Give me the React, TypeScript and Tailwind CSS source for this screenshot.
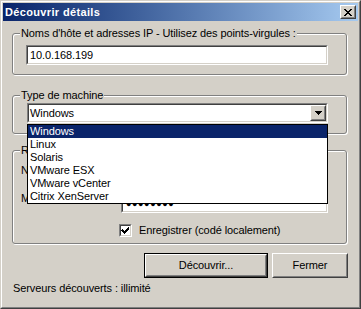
import React from 'react';

const font = "font-['Liberation_Sans',Arial,sans-serif] text-[11px] tracking-[-0.1px] leading-[13px] text-black";

const machines = ['Windows', 'Linux', 'Solaris', 'VMware ESX', 'VMware vCenter', 'Citrix XenServer'];

// Sunken 2px classic edit border
const Sunken = ({ className, children }: { className: string; children?: React.ReactNode }) => (
  <div className={`border border-t-[#808080] border-l-[#808080] border-r-white border-b-white ${className}`}>
    <div className="h-full border border-t-[#404040] border-l-[#404040] border-r-[#d4d0c8] border-b-[#d4d0c8] bg-white">
      {children}
    </div>
  </div>
);

const Raised = ({ className, children }: { className: string; children?: React.ReactNode }) => (
  <div className={`border border-t-white border-l-white border-r-[#404040] border-b-[#404040] bg-[#d4d0c8] ${className}`}>
    <div className="h-full border border-t-[#d4d0c8] border-l-[#d4d0c8] border-r-[#808080] border-b-[#808080] flex items-center justify-center">
      {children}
    </div>
  </div>
);

const GroupLabel = ({ children }: { children: React.ReactNode }) => (
  <span className="block w-fit h-[13px] -mt-[7px] ml-[7px] px-[1px] bg-[#d4d0c8]">{children}</span>
);

const groupCls = 'w-[335px] border border-[#808080] rounded-[3px] shadow-[inset_1px_1px_0_white,1px_1px_0_white]';

export default function App() {
  return (
    <div className={`${font} w-[361px] h-[309px] bg-[#d4d0c8] border border-t-[#d4d0c8] border-l-[#d4d0c8] border-r-[#404040] border-b-[#404040]`}>
      <div className="h-full p-px border border-t-white border-l-white border-r-[#808080] border-b-[#808080] flex flex-col">
        {/* Title bar */}
        <div className="h-[18px] flex items-center justify-between pl-[2px] pr-[2px] bg-gradient-to-r from-[#0a246a] to-[#a6caf0]">
          <span className="text-white font-bold tracking-[0.35px]">Découvrir détails</span>
          <Raised className="w-[16px] h-[14px]">
            <svg width="8" height="7" viewBox="0 0 8 7" shapeRendering="crispEdges">
              <path d="M0 0h2v1h1v1h2v-1h1v-1h2v1h-1v1h-1v1h-1v1h1v1h1v1h1v1h-2v-1h-1v-1h-2v1h-1v1h-2v-1h1v-1h1v-1h1v-1h-1v-1h-1v-1h-1z" fill="black" />
            </svg>
          </Raised>
        </div>

        <div className="flex-1 flex flex-col pl-[9px]">
          {/* Hosts */}
          <div className={`${groupCls} mt-[12px] h-[42px]`}>
            <GroupLabel>Noms d'hôte et adresses IP - Utilisez des points-virgules :</GroupLabel>
            <Sunken className="mt-[5px] ml-[13px] w-[302px] h-[20px]">
              <div className="pl-[2px] pt-[2px]">10.0.168.199</div>
            </Sunken>
          </div>

          {/* Machine type */}
          <div className={`${groupCls} mt-[20px] h-[39px] relative z-10`}>
            <GroupLabel>Type de machine</GroupLabel>
            <div className="relative mt-[1px] ml-[14px] w-[301px]">
              <Sunken className="w-[301px] h-[20px]">
                <div className="flex h-full items-center justify-between pl-[1px]">
                  <span>Windows</span>
                  <Raised className="w-[16px] h-[16px]">
                    <svg width="7" height="4" viewBox="0 0 7 4" shapeRendering="crispEdges">
                      <path d="M0 0h7v1h-1v1h-1v1h-1v1h-1v-1h-1v-1h-1v-1h-1z" fill="black" />
                    </svg>
                  </Raised>
                </div>
              </Sunken>
              <ul className="absolute left-0 top-[21px] w-[301px] border border-black bg-white">
                {machines.map((m, i) => (
                  <li
                    key={m}
                    className={`h-[13px] pl-[2px] ${i === 0 ? 'bg-[#0a246a] text-white' : ''}`}
                  >
                    {m}
                  </li>
                ))}
              </ul>
            </div>
          </div>

          {/* Credentials */}
          <div className={`${groupCls} mt-[16px] h-[94px]`}>
            <GroupLabel>Références</GroupLabel>
            <div className="flex items-center mt-[3px] h-[20px]">
              <span className="ml-[8px] w-[100px]">Nom d'utilisateur :</span>
              <Sunken className="w-[207px] h-[20px]" />
            </div>
            <div className="flex items-start mt-[13px] h-[20px]">
              <span className="ml-[8px] w-[100px] mt-[-1px]">Mot de passe :</span>
              <Sunken className="w-[207px] h-[20px]">
                <div className="pl-[3px] pt-[3px] text-[9px] tracking-[0.6px] leading-[12px]">●●●●●●●●</div>
              </Sunken>
            </div>
            <div className="flex items-center mt-[11px] h-[13px] ml-[106px]">
              <Sunken className="w-[13px] h-[13px]">
                <svg width="9" height="9" viewBox="0 0 9 9" shapeRendering="crispEdges">
                  <path d="M1 3h1v1h1v1h1v-1h1v-1h1v-1h1v-1h1v3h-1v1h-1v1h-1v1h-1v1h-1v-1h-1v-1h-1v-1h-1z" fill="black" />
                </svg>
              </Sunken>
              <span className="ml-[7px]">Enregistrer (codé localement)</span>
            </div>
          </div>

          {/* Buttons */}
          <div className="flex mt-[9px] ml-[132px] gap-[4px]">
            <div className="border border-black w-[124px] h-[25px]">
              <Raised className="w-full h-full">Découvrir...</Raised>
            </div>
            <Raised className="w-[76px] h-[25px]">Fermer</Raised>
          </div>

          <div className="mt-[4px] ml-[1px]">Serveurs découverts : illimité</div>
        </div>
      </div>
    </div>
  );
}
